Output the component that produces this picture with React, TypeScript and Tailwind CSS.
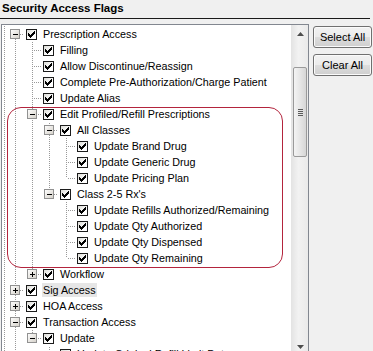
import React from "react";

type Row = { label: string; level: number; exp?: "minus" | "plus"; sel?: boolean };

const rows: Row[] = [
  { label: "Prescription Access", level: 1, exp: "minus" },
  { label: "Filling", level: 2 },
  { label: "Allow Discontinue/Reassign", level: 2 },
  { label: "Complete Pre-Authorization/Charge Patient", level: 2 },
  { label: "Update Alias", level: 2 },
  { label: "Edit Profiled/Refill Prescriptions", level: 2, exp: "minus" },
  { label: "All Classes", level: 3, exp: "minus" },
  { label: "Update Brand Drug", level: 4 },
  { label: "Update Generic Drug", level: 4 },
  { label: "Update Pricing Plan", level: 4 },
  { label: "Class 2-5 Rx's", level: 3, exp: "minus" },
  { label: "Update Refills Authorized/Remaining", level: 4 },
  { label: "Update Qty Authorized", level: 4 },
  { label: "Update Qty Dispensed", level: 4 },
  { label: "Update Qty Remaining", level: 4 },
  { label: "Workflow", level: 2, exp: "plus" },
  { label: "Sig Access", level: 1, exp: "plus", sel: true },
  { label: "HOA Access", level: 1, exp: "plus" },
  { label: "Transaction Access", level: 1, exp: "minus" },
  { label: "Update", level: 2, exp: "minus" },
  { label: "Update Original Refill Limit Date", level: 3 },
];

// rows below the visible part, only used to decide where the lines continue
const levels = [...rows.map((r) => r.level), 3, 1];

function hasNextAt(i: number, lvl: number) {
  for (let j = i + 1; j < levels.length; j++) {
    if (levels[j] < lvl) return false;
    if (levels[j] === lvl) return true;
  }
  return false;
}

const ROW_TOP = 26;
const X0 = 2;

function Guides({ i }: { i: number }) {
  const r = rows[i];
  const w = 5 + 17 * r.level;
  const top = ROW_TOP + 16 * i;
  const dots: React.ReactNode[] = [];
  const dot = (x: number, y: number) => {
    if ((x + X0 + y + top) % 2 === 0) dots.push(<rect key={`${x}-${y}`} x={x} y={y} width={1} height={1} />);
  };
  const vline = (x: number, y0: number, y1: number) => {
    for (let y = y0; y < y1; y++) dot(x, y);
  };
  const hline = (x0: number, x1: number, y: number) => {
    for (let x = x0; x < x1; x++) dot(x, y);
  };

  vline(2, 0, 16);
  for (let k = 0; k < r.level; k++) {
    const cx = 13 + 17 * k;
    if (k < r.level - 1) {
      if (hasNextAt(i, k + 1)) vline(cx, 0, 16);
    } else {
      if (i > 0) vline(cx, 0, 8);
      if (hasNextAt(i, r.level)) vline(cx, 8, 16);
      hline(cx + 1, w, 8);
    }
  }
  const cx = 13 + 17 * (r.level - 1);

  return (
    <svg width={w} height={16} className="shrink-0" shapeRendering="crispEdges">
      <g fill="#999999">{dots}</g>
      {r.exp && (
        <g>
          <defs>
            <linearGradient id={`eg${i}`} x1="0" y1="0" x2="1" y2="1">
              <stop offset="0" stopColor="#ffffff" />
              <stop offset="1" stopColor="#d4d0c8" />
            </linearGradient>
          </defs>
          <rect x={cx - 4.5} y={3.5} width={9} height={9} fill={`url(#eg${i})`} stroke="#919191" />
          <rect x={cx - 2} y={8} width={5} height={1} fill="#000" />
          {r.exp === "plus" && <rect x={cx} y={6} width={1} height={5} fill="#000" />}
        </g>
      )}
    </svg>
  );
}

const check = [[6], [5, 6], [0, 4, 5, 6], [0, 1, 3, 4, 5], [0, 1, 2, 3, 4], [1, 2, 3], [2]];

function Checkbox() {
  return (
    <span className="flex h-[11px] w-[11px] items-center justify-center border border-[#1c1c1c] bg-[linear-gradient(135deg,#dcdcd7,#ffffff_70%)]">
      <svg width={7} height={7} shapeRendering="crispEdges">
        {check.flatMap((xs, y) => xs.map((x) => <rect key={`${x}-${y}`} x={x} y={y} width={1} height={1} fill="#000" />))}
      </svg>
    </span>
  );
}

function ScrollArrow({ up }: { up?: boolean }) {
  return (
    <div className="flex h-[17px] items-center justify-center">
      <svg width={7} height={4} viewBox="0 0 7 4">
        <path d={up ? "M0 4 L3.5 0 L7 4 Z" : "M0 0 L3.5 4 L7 0 Z"} fill="#4d4d4d" />
      </svg>
    </div>
  );
}

function WinButton({ children }: { children: React.ReactNode }) {
  return (
    <button className="flex h-[22px] w-[59px] items-center justify-center rounded-[3px] border border-[#707070] bg-[linear-gradient(#f2f2f2_0%,#ebebeb_50%,#dddddd_51%,#cfcfcf_100%)] text-[11px] text-black shadow-[inset_0_0_0_1px_#fbfbfb]">
      {children}
    </button>
  );
}

export default function App() {
  return (
    <div className="h-[351px] w-[373px] overflow-hidden bg-[#f0f0f0] font-['Liberation_Sans',Arial,sans-serif] text-black">
      <div className="h-[18px] pl-[2px] text-[11.5px] font-bold leading-[17px]">Security Access Flags</div>
      <div className="h-px w-[370px] bg-[#1a1a1a]" />
      <div className="mt-[5px] flex items-start">
        <div className="ml-px flex h-[332px] w-[308px] border border-[#828790] bg-white">
          <div className="relative flex-1 overflow-hidden pt-px">
            {rows.map((r, i) => (
              <div key={i} className="flex h-[16px] items-center">
                <Guides i={i} />
                <span className="flex w-[17px] shrink-0 pl-[2px]">
                  <Checkbox />
                </span>
                <span
                  className={`ml-[1px] whitespace-nowrap px-[1px] text-[10.75px] leading-[14px] ${r.sel ? "bg-[#e6e6e6]" : ""}`}
                >
                  {r.label}
                </span>
              </div>
            ))}
            <div className="pointer-events-none absolute left-[5px] top-[82px] h-[161px] w-[276px] rounded-[14px] border border-[#b3243d]" />
          </div>
          <div className="flex w-[17px] flex-col border-l border-[#e4e4e4] bg-[linear-gradient(90deg,#e5e5e5,#f2f2f2_40%,#eaeaea)]">
            <ScrollArrow up />
            <div className="flex-1 px-px pt-[25px]">
              <div className="flex h-[90px] items-center justify-center rounded-[2px] border border-[#9a9a9a] bg-[linear-gradient(90deg,#f4f4f4,#e6e6e6_50%,#d6d6d6)]">
                <div className="flex flex-col gap-px">
                  <div className="h-px w-[5px] bg-[#5a5a5a]" />
                  <div className="h-px w-[5px] bg-[#5a5a5a]" />
                  <div className="h-px w-[5px] bg-[#5a5a5a]" />
                  <div className="h-px w-[5px] bg-[#5a5a5a]" />
                </div>
              </div>
            </div>
            <ScrollArrow />
          </div>
        </div>
        <div className="ml-[4px] mt-[2px] flex flex-col gap-[6px]">
          <WinButton>Select All</WinButton>
          <WinButton>Clear All</WinButton>
        </div>
      </div>
    </div>
  );
}
